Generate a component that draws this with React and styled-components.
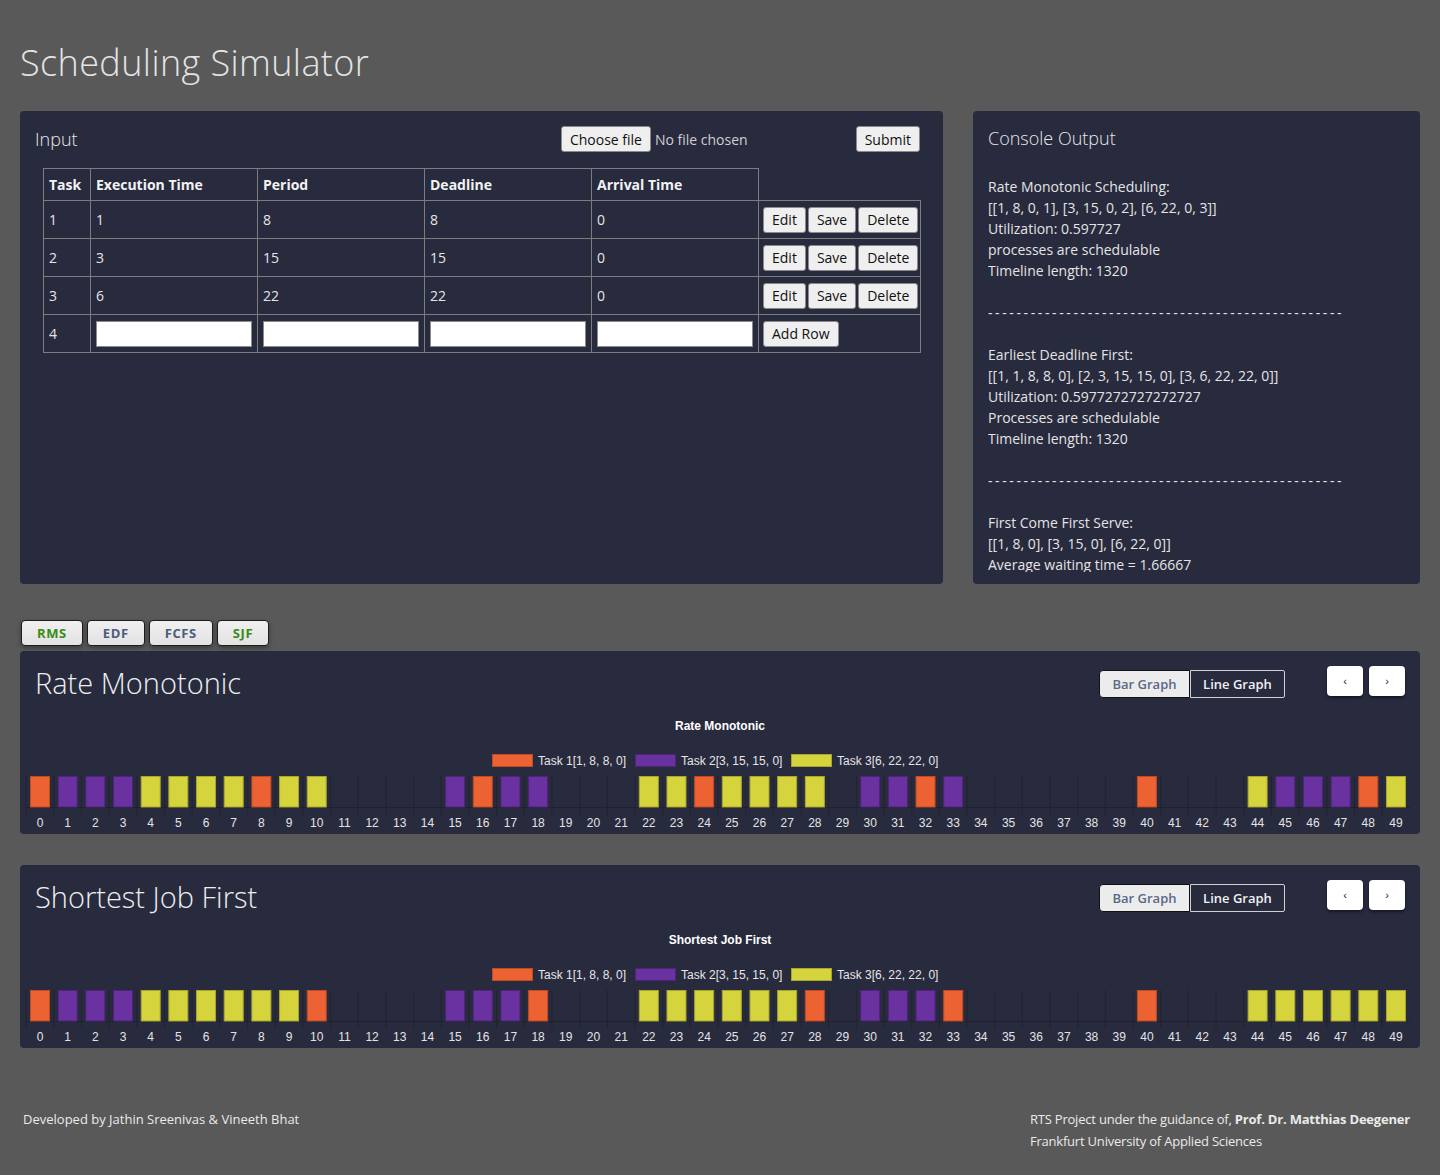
import React from 'react'
import styled, { createGlobalStyle, css } from 'styled-components'

const FONT = `'Open Sans', 'Noto Sans', sans-serif`
const CHART_FONT = `'Liberation Sans', Arial, sans-serif`

const GlobalStyle = createGlobalStyle`
  html, body {
    margin: 0;
    padding: 0;
    background: #595959;
    font-family: ${FONT};
    color: #e6e6e6;
  }
  * { box-sizing: border-box; }
`

const Page = styled.div`
  padding: 0 20px 40px;
  min-height: 1175px;
`

const Title = styled.h1`
  margin: 0;
  padding: 42px 0 27px;
  font-size: 36px;
  line-height: 42px;
  font-weight: 300;
  letter-spacing: 0.4px;
  color: #e4e4e4;
`

const TopRow = styled.div`
  display: grid;
  grid-template-columns: 923px 447px;
  gap: 30px;
`

const Panel = styled.section`
  background: #282a3e;
  border-radius: 4px;
  height: 473px;
  padding: 15px;
  overflow: hidden;
`

const PanelHeader = styled.div`
  display: flex;
  align-items: center;
  height: 26px;
  padding-right: 8px;
`

const PanelTitle = styled.h2`
  margin: 0;
  font-size: 18px;
  line-height: 25px;
  font-weight: 300;
  color: #e8e8e8;
`

const FileGroup = styled.div`
  display: flex;
  align-items: center;
  gap: 4px;
  margin-left: auto;
  margin-right: 108px;
  font-size: 14px;
  color: #cfcfcf;
`

const Btn = styled.button`
  font-family: ${FONT};
  font-size: 14px;
  height: 26px;
  padding: 0 8px;
  background: #efefef;
  color: #111;
  border: 1px solid #8a8a8a;
  border-radius: 3px;
  white-space: nowrap;
  cursor: pointer;
`

const Table = styled.table`
  margin: 16px 8px 0;
  border-collapse: collapse;
  table-layout: fixed;
  width: 877px;
  font-size: 14px;
  color: #e6e6e6;

  th, td {
    border: 1px solid #7d7d7d;
    text-align: left;
    padding: 0 5px;
  }
  th {
    height: 32px;
    font-weight: 700;
    color: #f2f2f2;
  }
  td { height: 38px; }
  th.blank { border: none; }
`

const ActionCell = styled.td`
  && { padding: 0 4px; }
`

const Actions = styled.div`
  display: flex;
  gap: 2px;
`

const CellInput = styled.input`
  width: 100%;
  height: 26px;
  border: 1px solid #8a8a8a;
  background: #fff;
`

const ConsoleBody = styled.div`
  margin-top: 25px;
  height: 396px;
  overflow: hidden;
  font-size: 14px;
  line-height: 21px;
  font-weight: 400;
  color: #e4e4e4;
`

const ConsoleLine = styled.div`
  min-height: 21px;
  white-space: nowrap;
`

const Dashes = styled(ConsoleLine)`
  letter-spacing: 2.62px;
`

const Tabs = styled.div`
  display: flex;
  gap: 4px;
  margin: 36px 0 5px 1px;
`

const Tab = styled.button`
  font-family: ${FONT};
  font-size: 13px;
  font-weight: 700;
  letter-spacing: 0.6px;
  height: 26px;
  padding: 0 15px;
  background: linear-gradient(#f0f0f0, #e2e2e2);
  border: 1px solid #1e1e1e;
  border-radius: 4px;
  box-shadow: 0 2px 4px rgba(0, 0, 0, 0.35);
  color: ${({ $active }) => ($active ? '#3b8a17' : '#4d5b7c')};
`

const ChartCard = styled.section`
  background: #282a3e;
  border-radius: 4px;
  height: 183px;
  & + & { margin-top: 31px; }
`

const ChartHeader = styled.div`
  display: flex;
  align-items: center;
  height: 62px;
  padding: 0 15px;
`

const ChartTitle = styled.h2`
  margin: 0;
  font-size: 29px;
  font-weight: 300;
  color: #eeeeee;
  flex: 1;
`

const Toggle = styled.div`
  display: flex;
  margin-top: 4px;
  margin-right: 42px;
`

const ToggleBtn = styled.button`
  font-family: ${FONT};
  font-size: 13px;
  font-weight: 600;
  height: 28px;
  padding: 0;
  white-space: nowrap;
  cursor: pointer;
  ${({ $on }) =>
    $on
      ? css`
          background: #ececec;
          color: #5a6888;
          border: 1px solid #111;
          border-radius: 4px 0 0 4px;
          width: 91px;
        `
      : css`
          background: #282a3e;
          color: #f0f0f0;
          border: 1px solid #d0d0d0;
          border-radius: 0 2px 2px 0;
          width: 95px;
        `}
`

const NavGroup = styled.div`
  display: flex;
  gap: 6px;
  margin-top: -2px;
`

const NavBtn = styled.button`
  width: 36px;
  height: 30px;
  background: #fff;
  border: none;
  border-radius: 4px;
  box-shadow: 0 2px 3px rgba(0, 0, 0, 0.45);
  font-size: 11px;
  color: #222;
  cursor: pointer;
`

const Footer = styled.footer`
  display: flex;
  justify-content: space-between;
  margin-top: 60px;
  padding: 0 10px 0 3px;
  font-size: 13px;
  line-height: 22px;
  color: #eaeaea;
  b { font-weight: 700; }
`

const FooterRight = styled.div`
  letter-spacing: -0.2px;
`

const TASK_FILL = { 1: '#ec6233', 2: '#6a32a0', 3: '#d6d43c' }
const TASK_STROKE = { 1: '#c04a22', 2: '#4e2478', 3: '#a8a62c' }
const LEGEND = [
  { id: 1, label: 'Task 1[1, 8, 8, 0]', x: 472 },
  { id: 2, label: 'Task 2[3, 15, 15, 0]', x: 615 },
  { id: 3, label: 'Task 3[6, 22, 22, 0]', x: 771 },
]

const rms = ['1222', '3333', '1', '33', '0000', '2', '1', '22', '000', '33', '1', '3333', '0', '22', '1', '2', '000000', '1', '000', '3', '222', '1', '3'].join('')
const sjf = ['1', '222', '333333', '1', '0000', '222', '1', '000', '333333', '1', '0', '222', '1', '000000', '1', '000', '333333'].join('')

const Svg = styled.svg`
  display: block;
  font-family: ${CHART_FONT};
`

function Timeline({ title, seq }) {
  const step = 27.673
  const x0 = 20
  const slots = seq.split('').map(Number)
  return (
    <Svg width="1400" height="121" viewBox="0 0 1400 121">
      <text x="700" y="17" textAnchor="middle" fontSize="12" fontWeight="700" fill="#ffffff">{title}</text>
      {LEGEND.map((l) => (
        <g key={l.id}>
          <rect x={l.x + 0.5} y="41.5" width="40" height="12" fill={TASK_FILL[l.id]} stroke={TASK_STROKE[l.id]} />
          <text x={l.x + 46} y="51.5" fontSize="12" fill="#e6e6e6">{l.label}</text>
        </g>
      ))}
      {slots.map((_, i) => (
        <line key={'g' + i} x1={x0 - step / 2 + i * step} x2={x0 - step / 2 + i * step} y1="63" y2="102" stroke="#22242f" />
      ))}
      <line x1={x0 - step / 2} x2={x0 - step / 2 + 50 * step} y1="94.5" y2="94.5" stroke="#1f212c" />
      {slots.map((t, i) =>
        t ? (
          <rect key={'b' + i} x={x0 + i * step - 9.5} y="63.5" width="19" height="30.5" fill={TASK_FILL[t]} stroke={TASK_STROKE[t]} />
        ) : null
      )}
      {slots.map((_, i) => (
        <text key={'l' + i} x={x0 + i * step} y="114" textAnchor="middle" fontSize="12" fill="#e4e4e4">{i}</text>
      ))}
    </Svg>
  )
}

function ChartPanel({ title, seq }) {
  return (
    <ChartCard>
      <ChartHeader>
        <ChartTitle>{title}</ChartTitle>
        <Toggle>
          <ToggleBtn $on>Bar Graph</ToggleBtn>
          <ToggleBtn>Line Graph</ToggleBtn>
        </Toggle>
        <NavGroup>
          <NavBtn>‹</NavBtn>
          <NavBtn>›</NavBtn>
        </NavGroup>
      </ChartHeader>
      <Timeline title={title} seq={seq} />
    </ChartCard>
  )
}

const rows = [
  [1, 1, 8, 8, 0],
  [2, 3, 15, 15, 0],
  [3, 6, 22, 22, 0],
]

const DASH = '-'.repeat(50)
const consoleLines = [
  'Rate Monotonic Scheduling:',
  '[[1, 8, 0, 1], [3, 15, 0, 2], [6, 22, 0, 3]]',
  'Utilization: 0.597727',
  'processes are schedulable',
  'Timeline length: 1320',
  '',
  DASH,
  '',
  'Earliest Deadline First:',
  '[[1, 1, 8, 8, 0], [2, 3, 15, 15, 0], [3, 6, 22, 22, 0]]',
  'Utilization: 0.5977272727272727',
  'Processes are schedulable',
  'Timeline length: 1320',
  '',
  DASH,
  '',
  'First Come First Serve:',
  '[[1, 8, 0], [3, 15, 0], [6, 22, 0]]',
  'Average waiting time = 1.66667',
]

export default function App() {
  return (
    <Page>
      <GlobalStyle />
      <Title>Scheduling Simulator</Title>
      <TopRow>
        <Panel>
          <PanelHeader>
            <PanelTitle>Input</PanelTitle>
            <FileGroup>
              <Btn>Choose file</Btn>
              <span>No file chosen</span>
            </FileGroup>
            <Btn>Submit</Btn>
          </PanelHeader>
          <Table>
            <colgroup>
              <col style={{ width: 47 }} />
              <col style={{ width: 167 }} />
              <col style={{ width: 167 }} />
              <col style={{ width: 167 }} />
              <col style={{ width: 167 }} />
              <col style={{ width: 162 }} />
            </colgroup>
            <thead>
              <tr>
                <th>Task</th>
                <th>Execution Time</th>
                <th>Period</th>
                <th>Deadline</th>
                <th>Arrival Time</th>
                <th className="blank" />
              </tr>
            </thead>
            <tbody>
              {rows.map((r) => (
                <tr key={r[0]}>
                  {r.map((v, i) => (
                    <td key={i}>{v}</td>
                  ))}
                  <ActionCell>
                    <Actions>
                      <Btn>Edit</Btn>
                      <Btn>Save</Btn>
                      <Btn>Delete</Btn>
                    </Actions>
                  </ActionCell>
                </tr>
              ))}
              <tr>
                <td>4</td>
                <td><CellInput /></td>
                <td><CellInput /></td>
                <td><CellInput /></td>
                <td><CellInput /></td>
                <ActionCell>
                  <Btn>Add Row</Btn>
                </ActionCell>
              </tr>
            </tbody>
          </Table>
        </Panel>
        <Panel>
          <PanelTitle>Console Output</PanelTitle>
          <ConsoleBody>
            {consoleLines.map((l, i) =>
              l === DASH ? <Dashes key={i}>{l}</Dashes> : <ConsoleLine key={i}>{l}</ConsoleLine>
            )}
          </ConsoleBody>
        </Panel>
      </TopRow>
      <Tabs>
        <Tab $active>RMS</Tab>
        <Tab>EDF</Tab>
        <Tab>FCFS</Tab>
        <Tab $active>SJF</Tab>
      </Tabs>
      <ChartPanel title="Rate Monotonic" seq={rms} />
      <ChartPanel title="Shortest Job First" seq={sjf} />
      <Footer>
        <div>Developed by Jathin Sreenivas &amp; Vineeth Bhat</div>
        <FooterRight>
          RTS Project under the guidance of, <b>Prof. Dr. Matthias Deegener</b>
          <br />
          Frankfurt University of Applied Sciences
        </FooterRight>
      </Footer>
    </Page>
  )
}
